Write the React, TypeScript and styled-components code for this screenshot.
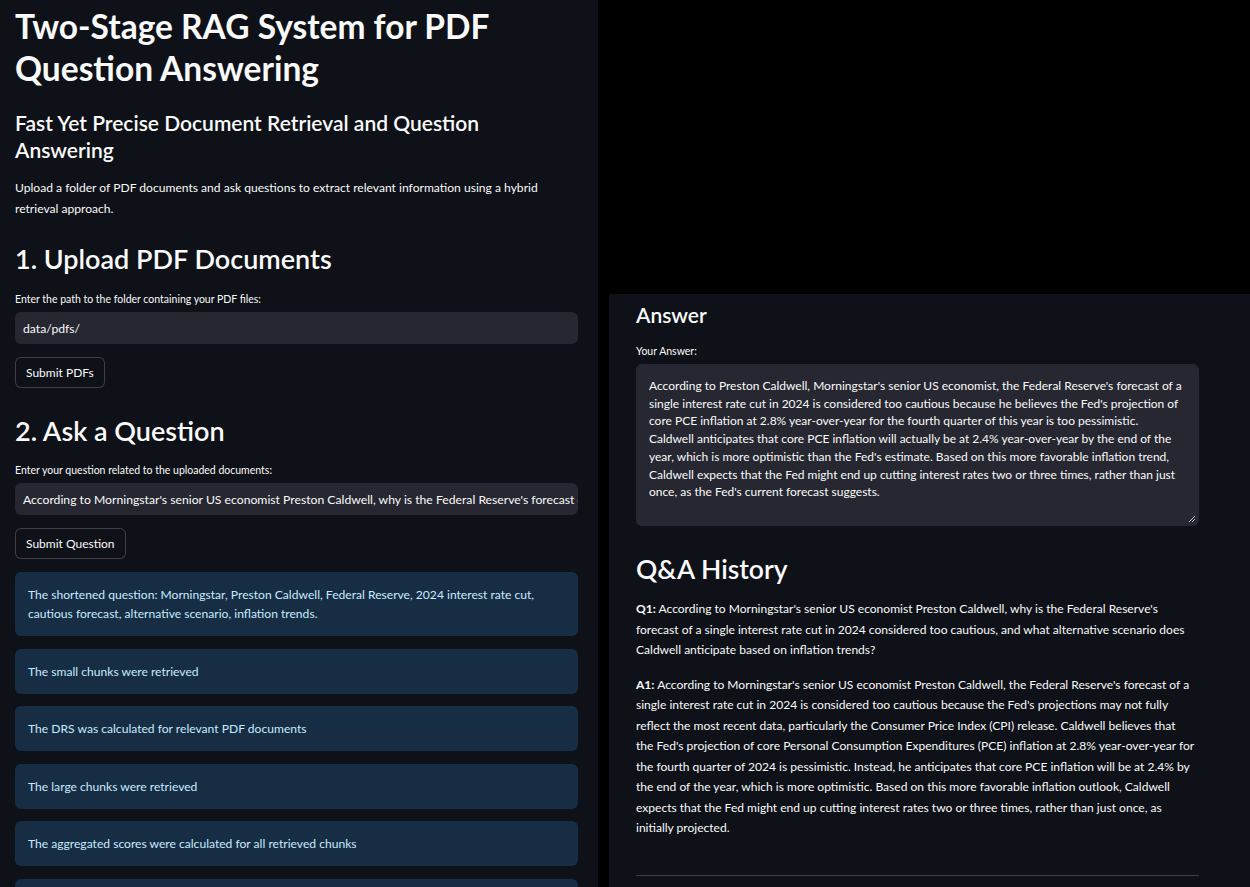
import React from "react";
import styled, { createGlobalStyle } from "styled-components";

const Global = createGlobalStyle`
  html, body { margin: 0; padding: 0; background: #000; }
  body { font-family: Lato, "Noto Sans", sans-serif; color: #fafafa; }
  * { box-sizing: border-box; }
`;

const Page = styled.div`
  display: flex;
  width: 1250px;
  height: 887px;
  overflow: hidden;
  gap: 11px;
  background: #000;
`;

const LeftCol = styled.main`
  width: 598px;
  flex: none;
  background: #0e1117;
  padding: 5px 20px 0 15px;
  display: flex;
  flex-direction: column;
  & > * { flex-shrink: 0; }
`;

const RightCol = styled.div`
  flex: 1;
  display: flex;
  flex-direction: column;
  padding-top: 294px;
`;

const RightPanel = styled.section`
  flex: 1;
  background: #0e1117;
  padding: 0 51px 0 27px;
  display: flex;
  flex-direction: column;
  & > * { flex-shrink: 0; }
`;

const Title = styled.h1`
  margin: 0;
  font-size: 33.5px;
  line-height: 42px;
  font-weight: 700;
`;

const Subtitle = styled.h3`
  margin: 20px 0 0;
  font-size: 21px;
  line-height: 27px;
  font-weight: 600;
`;

const Para = styled.p`
  margin: 14px 0 0;
  font-size: 12.1px;
  line-height: 21px;
`;

const H2 = styled.h2<{ $top: number; $size?: number }>`
  margin: ${(p) => p.$top}px 0 0;
  font-size: ${(p) => p.$size ?? 27}px;
  line-height: 36px;
  font-weight: 600;
`;

const H3 = styled.h3`
  margin: 6px 0 0;
  font-size: 21px;
  line-height: 30px;
  font-weight: 600;
`;

const Label = styled.label<{ $top?: number }>`
  display: block;
  margin-top: ${(p) => p.$top ?? 15}px;
  font-size: 10.5px;
  line-height: 14px;
`;

const Input = styled.div`
  margin-top: 6px;
  height: 32px;
  background: #262730;
  border-radius: 6px;
  padding: 0 8px;
  display: flex;
  align-items: center;
  font-size: 12.2px;
  white-space: nowrap;
  overflow: hidden;
`;

const Button = styled.button`
  align-self: flex-start;
  margin-top: 13px;
  height: 31px;
  padding: 0 10px;
  background: #0e1117;
  color: #fafafa;
  border: 1px solid rgba(250, 250, 250, 0.2);
  border-radius: 6px;
  font-family: inherit;
  font-size: 12px;
`;

const InfoList = styled.div`
  margin-top: 13px;
  display: flex;
  flex-direction: column;
  gap: 12.5px;
`;

const Info = styled.div`
  background: #172d43;
  color: #c7ebff;
  border-radius: 6px;
  padding: 13px 13px;
  font-size: 12.1px;
  line-height: 19px;
  min-height: 45px;
`;

const TextArea = styled.div`
  margin-top: 6px;
  height: 162px;
  background: #262730;
  border-radius: 6px;
  padding: 13px 13px;
  font-size: 12px;
  line-height: 17.7px;
  position: relative;
`;

const Grip = styled.svg`
  position: absolute;
  right: 3px;
  bottom: 3px;
`;

const HistoryPara = styled.p<{ $top: number; $lines?: boolean }>`
  margin: ${(p) => p.$top}px 0 0;
  font-size: 12.05px;
  line-height: 20.5px;
  white-space: ${(p) => (p.$lines ? "nowrap" : "normal")};
`;

const Divider = styled.hr`
  margin: 36px 0 0;
  border: none;
  border-top: 1px solid rgba(250, 250, 250, 0.2);
`;

const steps = [
  "The shortened question: Morningstar, Preston Caldwell, Federal Reserve, 2024 interest rate cut, cautious forecast, alternative scenario, inflation trends.",
  "The small chunks were retrieved",
  "The DRS was calculated for relevant PDF documents",
  "The large chunks were retrieved",
  "The aggregated scores were calculated for all retrieved chunks",
  "The final answer was generated",
];

const answerLines = [
  "According to Morningstar's senior US economist Preston Caldwell, the Federal Reserve's forecast of a",
  "single interest rate cut in 2024 is considered too cautious because the Fed's projections may not fully",
  "reflect the most recent data, particularly the Consumer Price Index (CPI) release. Caldwell believes that",
  "the Fed's projection of core Personal Consumption Expenditures (PCE) inflation at 2.8% year-over-year for",
  "the fourth quarter of 2024 is pessimistic. Instead, he anticipates that core PCE inflation will be at 2.4% by",
  "the end of the year, which is more optimistic. Based on this more favorable inflation outlook, Caldwell",
  "expects that the Fed might end up cutting interest rates two or three times, rather than just once, as",
  "initially projected.",
];

export default function App() {
  return (
    <>
      <Global />
      <Page>
        <LeftCol>
          <Title>Two-Stage RAG System for PDF Question Answering</Title>
          <Subtitle>Fast Yet Precise Document Retrieval and Question Answering</Subtitle>
          <Para>
            Upload a folder of PDF documents and ask questions to extract relevant information using a hybrid
            retrieval approach.
          </Para>
          <H2 $top={22}>1. Upload PDF Documents</H2>
          <Label>Enter the path to the folder containing your PDF files:</Label>
          <Input>data/pdfs/</Input>
          <Button>Submit PDFs</Button>
          <H2 $top={25}>2. Ask a Question</H2>
          <Label $top={14}>Enter your question related to the uploaded documents:</Label>
          <Input>
            According to Morningstar's senior US economist Preston Caldwell, why is the Federal Reserve's forecast of a
            single interest rate cut in 2024 considered too cautious
          </Input>
          <Button>Submit Question</Button>
          <InfoList>
            {steps.map((s) => (
              <Info key={s}>{s}</Info>
            ))}
          </InfoList>
        </LeftCol>
        <RightCol>
          <RightPanel>
            <H3>Answer</H3>
            <Label $top={14}>Your Answer:</Label>
            <TextArea>
              According to Preston Caldwell, Morningstar's senior US economist, the Federal Reserve's forecast of a
              single interest rate cut in 2024 is considered too cautious because he believes the Fed's projection of
              core PCE inflation at 2.8% year-over-year for the fourth quarter of this year is too pessimistic.
              Caldwell anticipates that core PCE inflation will actually be at 2.4% year-over-year by the end of the
              year, which is more optimistic than the Fed's estimate. Based on this more favorable inflation trend,
              Caldwell expects that the Fed might end up cutting interest rates two or three times, rather than just
              once, as the Fed's current forecast suggests.
              <Grip width="8" height="8" viewBox="0 0 8 8">
                <path d="M7 1 L1 7 M7 4 L4 7" stroke="#bbb" strokeWidth="1" />
              </Grip>
            </TextArea>
            <H2 $top={25} $size={26.5}>Q&amp;A History</H2>
            <HistoryPara $top={12}>
              <b>Q1:</b> According to Morningstar's senior US economist Preston Caldwell, why is the Federal
              Reserve's forecast of a single interest rate cut in 2024 considered too cautious, and what alternative
              scenario does Caldwell anticipate based on inflation trends?
            </HistoryPara>
            <HistoryPara $top={14} $lines>
              <b>A1:</b>{" "}
              {answerLines.map((l, i) => (
                <React.Fragment key={i}>
                  {l}
                  {i < answerLines.length - 1 && <br />}
                </React.Fragment>
              ))}
            </HistoryPara>
            <Divider />
          </RightPanel>
        </RightCol>
      </Page>
    </>
  );
}
